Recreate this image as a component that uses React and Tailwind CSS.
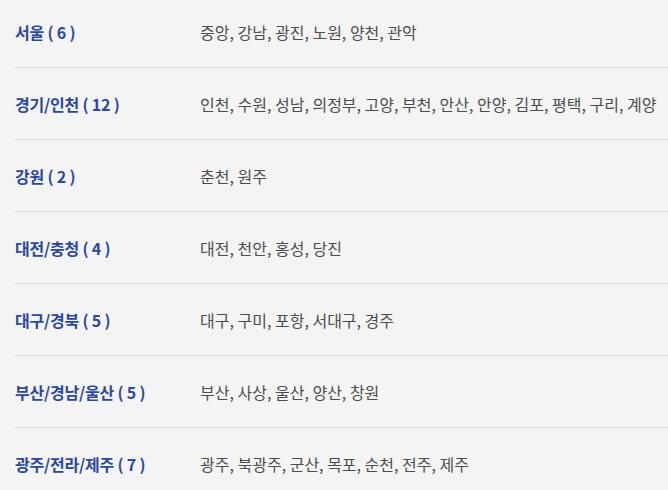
const regions = [
  { name: "서울", count: 6, cities: "중앙, 강남, 광진, 노원, 양천, 관악" },
  { name: "경기/인천", count: 12, cities: "인천, 수원, 성남, 의정부, 고양, 부천, 안산, 안양, 김포, 평택, 구리, 계양" },
  { name: "강원", count: 2, cities: "춘천, 원주" },
  { name: "대전/충청", count: 4, cities: "대전, 천안, 홍성, 당진" },
  { name: "대구/경북", count: 5, cities: "대구, 구미, 포항, 서대구, 경주" },
  { name: "부산/경남/울산", count: 5, cities: "부산, 사상, 울산, 양산, 창원" },
  { name: "광주/전라/제주", count: 7, cities: "광주, 북광주, 군산, 목포, 순천, 전주, 제주" },
];

export default function App() {
  return (
    <div
      className="w-[668px] h-[490px] overflow-hidden bg-[#f4f4f4] pl-[15px]"
      style={{ fontFamily: '"Noto Sans CJK KR", "Noto Sans", sans-serif' }}
    >
      <ul className="-mt-1">
        {regions.map((r) => (
          <li
            key={r.name}
            className="flex items-center h-[72px] border-b border-[#dddddd]"
          >
            <div className="w-[185px] shrink-0 text-[16px] font-bold text-[#2c48a0] whitespace-nowrap tracking-[-0.2px]">
              {r.name} ( {r.count} )
            </div>
            <div className="text-[16px] text-[#4d4d4d] whitespace-nowrap">{r.cities}</div>
          </li>
        ))}
      </ul>
    </div>
  );
}
